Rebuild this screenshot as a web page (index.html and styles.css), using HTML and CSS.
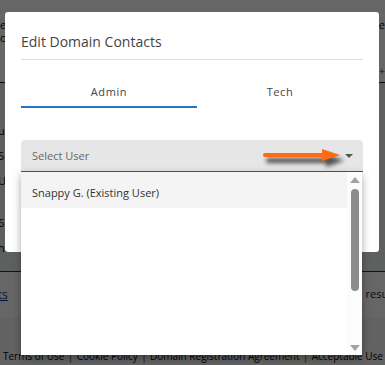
FILE: index.html
```html
<!DOCTYPE html>
<html lang="en">
<head>
  <meta charset="UTF-8" />
  <meta name="viewport" content="width=device-width, initial-scale=1" />
  <title>Edit Domain Contacts</title>
  <link rel="stylesheet" href="styles.css">
</head>
<body>

<div class="page">
  <section class="page-top">
    <div class="page-line"><span>e</span><span>e</span></div>
    <div class="page-line"><span>or</span><span></span></div>
    <div class="page-line plus-line"><span></span><span>+</span></div>
  </section>

  <section class="page-content">
    <p>up</p>
    <p>5</p>
    <p>U</p>
    <p class="gap">6</p>
    <p>n.</p>
  </section>

  <section class="page-links">
    <a href="#">cts</a>
    <span>resul</span>
  </section>

  <footer class="page-footer">
    <a href="#">Terms of Use</a><span class="sep">|</span>
    <a href="#">Cookie Policy</a><span class="sep">|</span>
    <a href="#">Domain Registration Agreement</a><span class="sep">|</span>
    <a href="#">Acceptable Use</a>
  </footer>
</div>

<div class="overlay"></div>

<div class="modal">
  <h2 class="modal-title">Edit Domain Contacts</h2>

  <div class="tabs">
    <div class="tab active">Admin</div>
    <div class="tab">Tech</div>
  </div>

  <div class="select-wrap">
    <div class="select">
      <span>Select User</span>
      <span class="caret"></span>
    </div>

    <svg class="pointer" width="96" height="30" viewBox="0 0 96 30">
      <defs>
        <filter id="shade" x="-20%" y="-60%" width="140%" height="220%">
          <feGaussianBlur stdDeviation="2.2" />
        </filter>
      </defs>
      <g filter="url(#shade)" fill="#1a1a1a" opacity="0.75" transform="translate(3 5)">
        <rect x="4" y="9" width="64" height="5" rx="2.5" />
        <polygon points="64,5 82,11.5 64,18" />
      </g>
      <g fill="#ff6a13">
        <rect x="4" y="9" width="64" height="4" rx="2" />
        <polygon points="63,5 81,11 63,17" />
      </g>
    </svg>

    <div class="dropdown">
      <div class="option">Snappy G. (Existing User)</div>
      <div class="track-line"></div>
      <div class="scrollbar">
        <span class="arrow-up"></span>
        <span class="thumb"></span>
        <span class="arrow-down"></span>
      </div>
    </div>
  </div>
</div>

</body>
</html>
```

FILE: styles.css
```css
* { margin: 0; padding: 0; box-sizing: border-box; }

body {
  font-family: 'Open Sans', 'Noto Sans', sans-serif;
  width: 385px;
  height: 365px;
  overflow: hidden;
  color: #000;
  background: #fff;
}

/* page behind the dialog */
.page {
  display: flex;
  flex-direction: column;
  height: 365px;
  font-size: 11px;
}

.page-top {
  height: 83px;
  padding-top: 18px;
  border-bottom: 1px solid #222;
  background: #fff;
}

.page-line {
  display: flex;
  justify-content: space-between;
  height: 13px;
  line-height: 13px;
}

.plus-line { margin-top: 20px; color: #1a3a6a; }

.page-content {
  height: 189px;
  padding-top: 35px;
  background: #e9f1ea;
  border-bottom: 1px solid #333;
}

.page-content p {
  line-height: 25px;
  margin-left: -2px;
}

.page-content p.gap { margin-top: 17px; }

.page-links {
  display: flex;
  justify-content: space-between;
  align-items: center;
  height: 45px;
  background: #fefefe;
}

.page-links a {
  color: #0a3a80;
  font-size: 12px;
  margin-left: -8px;
}

.page-links span { color: #222; margin-top: -2px; margin-right: -6px; }

.page-footer {
  flex: 1;
  display: flex;
  align-items: flex-end;
  justify-content: space-between;
  white-space: nowrap;
  padding: 0 2px 2px 3px;
  background: #f4f4f4;
  font-size: 10px;
  line-height: 14px;
}

.page-footer a { color: #000; text-decoration: none; }
.page-footer .sep { color: #333; }

.overlay {
  position: fixed;
  inset: 0;
  background: rgba(0, 0, 0, 0.6);
}

/* dialog */
.modal {
  position: fixed;
  left: 5px;
  top: 12px;
  width: 374px;
  height: 240px;
  background: #fff;
  border-radius: 3px;
  padding: 21px 16px 0;
}

.modal-title {
  font-size: 14px;
  font-weight: 400;
  color: #444;
  line-height: 18px;
  padding-bottom: 8px;
  border-bottom: 1px solid #dedede;
}

.tabs {
  display: flex;
  margin-top: 24px;
}

.tab {
  flex: 1;
  text-align: center;
  font-size: 11px;
  letter-spacing: 0.6px;
  color: #444;
  line-height: 16px;
  padding-bottom: 6px;
  border-bottom: 2px solid transparent;
}

.tab.active {
  flex: 0 0 176px;
  border-bottom-color: #2473c4;
}

.select-wrap {
  position: relative;
  margin-top: 32px;
}

.select {
  display: flex;
  justify-content: space-between;
  align-items: center;
  height: 32px;
  padding: 0 11px;
  background: #e6e6e6;
  border-radius: 4px 4px 0 0;
  border-bottom: 1px solid #555;
  font-size: 11px;
  color: #666;
}

.caret {
  width: 0;
  height: 0;
  border-left: 4px solid transparent;
  border-right: 4px solid transparent;
  border-top: 4px solid #555;
  margin-right: -1px;
}

.pointer {
  position: absolute;
  left: 238px;
  top: 4px;
}

.dropdown {
  position: absolute;
  left: 0;
  top: 32px;
  width: 341px;
  height: 183px;
  background: #fff;
  box-shadow: 0 3px 8px rgba(0, 0, 0, 0.35);
}

.option {
  height: 36px;
  padding: 13px 11px 0;
  margin-right: 15px;
  line-height: 16px;
  background: #f4f4f4;
  font-size: 11px;
  color: #333;
}

.track-line {
  position: absolute;
  left: 326px;
  top: 35px;
  bottom: 0;
  width: 1px;
  background: #666;
}

.scrollbar {
  position: absolute;
  right: 0;
  top: 0;
  bottom: 0;
  width: 15px;
  display: flex;
  flex-direction: column;
  align-items: center;
  padding: 5px 0 4px;
  background: #fcfcfc;
}

.arrow-up,
.arrow-down {
  width: 0;
  height: 0;
  border-left: 5px solid transparent;
  border-right: 5px solid transparent;
}

.arrow-up { border-bottom: 6px solid #a3a3a3; }
.arrow-down { border-top: 6px solid #a3a3a3; margin-top: auto; }

.thumb {
  width: 8px;
  height: 102px;
  margin-top: 6px;
  border-radius: 4px;
  background: #8c8c8c;
}
```
